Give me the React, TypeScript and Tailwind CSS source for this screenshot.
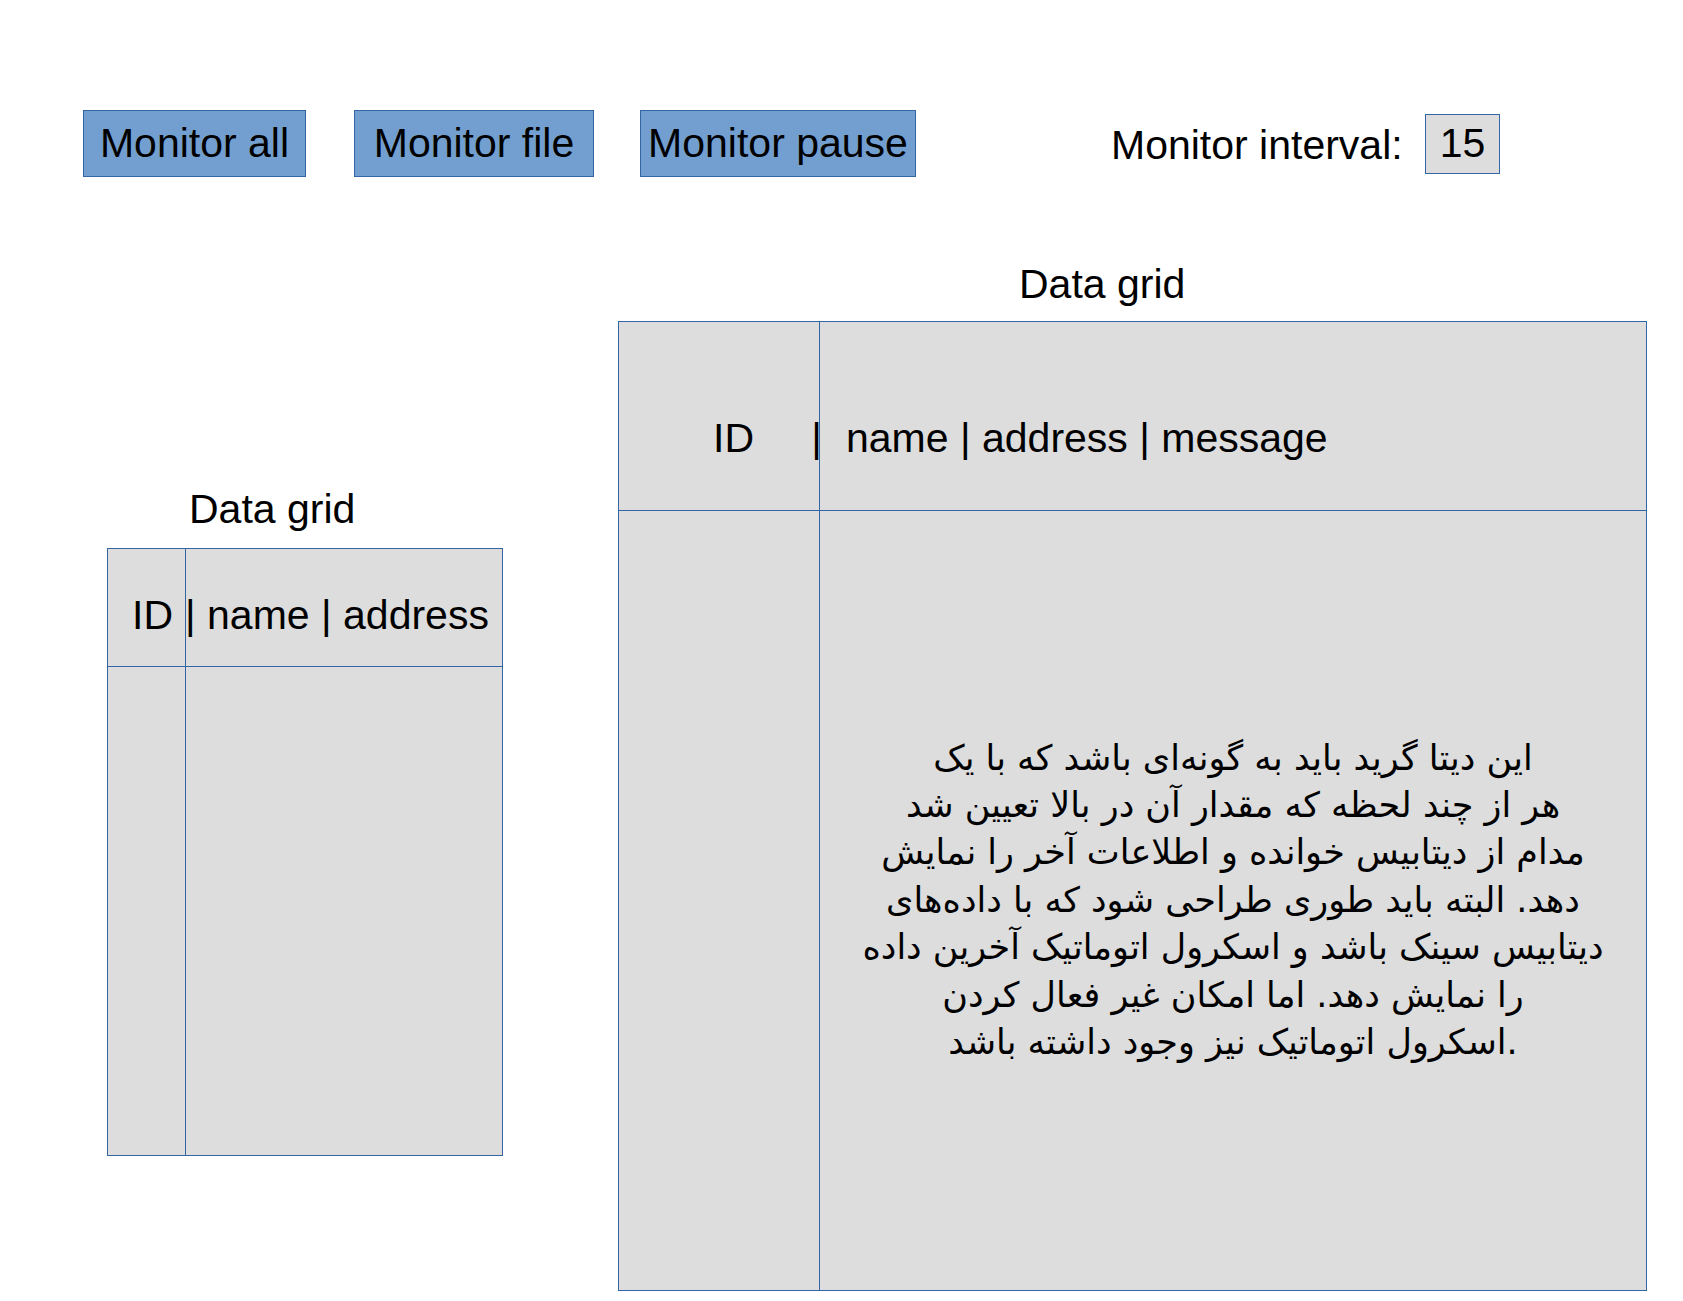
import React from "react";

const persianLines = [
  "این دیتا گرید باید به گونه‌ای باشد که با یک",
  "هر از چند لحظه که مقدار آن در بالا تعیین شد",
  "مدام از دیتابیس خوانده و اطلاعات آخر را نمایش",
  "دهد. البته باید طوری طراحی شود که با داده‌های",
  "دیتابیس سینک باشد و اسکرول اتوماتیک آخرین داده",
  "را نمایش دهد. اما امکان غیر فعال کردن",
  "اسکرول اتوماتیک نیز وجود داشته باشد.",
];

export default function App() {
  return (
    <div className="w-[1683px] h-[1301px] bg-white text-black overflow-hidden font-['Liberation_Sans','DejaVu_Sans',sans-serif]">
      {/* toolbar row */}
      <div className="flex items-center pl-[83px] pt-[110px]">
        <div className="w-[223px] h-[67px] shrink-0 bg-[#729fcf] border border-[#3465a4] flex items-center justify-center text-[41px] leading-none">
          Monitor all
        </div>
        <div className="w-[240px] ml-[48px] h-[67px] shrink-0 bg-[#729fcf] border border-[#3465a4] flex items-center justify-center text-[41px] leading-none">
          Monitor file
        </div>
        <div className="w-[276px] ml-[46px] h-[67px] shrink-0 bg-[#729fcf] border border-[#3465a4] flex items-center justify-center text-[41px] leading-none whitespace-nowrap">
          Monitor pause
        </div>
        <div className="w-[314px] ml-[195px] shrink-0 text-[41px] leading-none mt-[3px] whitespace-nowrap">
          Monitor interval:
        </div>
        <div className="w-[75px] h-[60px] shrink-0 bg-[#dddddd] border border-[#3465a4] flex items-center justify-center text-[41px] leading-none">
          15
        </div>
      </div>

      {/* grids */}
      <div className="flex items-start">
        {/* left grid */}
        <div className="ml-[107px] mt-[312px] w-[396px] shrink-0">
          <div className="h-[41px] pl-[82px] text-[41px] leading-none whitespace-nowrap">Data grid</div>
          <div className="mt-[18px] h-[608px] border border-[#3465a4] bg-[#dddddd] flex flex-col">
            <div className="h-[118px] border-b border-[#3465a4] flex shrink-0">
              <div className="w-[78px] border-r border-[#3465a4] pl-[24px] pt-[46px] text-[41px] leading-none whitespace-nowrap">
                ID
              </div>
              <div className="flex-1 pt-[46px] text-[41px] leading-none whitespace-nowrap ml-[-1px]">
                | name | address
              </div>
            </div>
            <div className="flex-1 flex">
              <div className="w-[78px] border-r border-[#3465a4]" />
              <div className="flex-1" />
            </div>
          </div>
        </div>

        {/* right grid */}
        <div className="ml-[115px] mt-[87px] w-[1029px] shrink-0">
          <div className="h-[41px] pl-[401px] text-[41px] leading-none whitespace-nowrap">Data grid</div>
          <div className="mt-[16px] h-[970px] border border-[#3465a4] bg-[#dddddd] flex flex-col">
            <div className="h-[189px] border-b border-[#3465a4] flex shrink-0">
              <div className="w-[201px] border-r border-[#3465a4] pl-[94px] pt-[96px] text-[41px] leading-none whitespace-nowrap flex">
                <span>ID</span>
                <span className="ml-auto mr-[-3px]">|</span>
              </div>
              <div className="flex-1 pl-[26px] pt-[96px] text-[41px] leading-none whitespace-nowrap">
                name | address | message
              </div>
            </div>
            <div className="flex-1 flex">
              <div className="w-[201px] border-r border-[#3465a4]" />
              <div className="flex-1 flex items-center justify-center">
                <div dir="ltr" className="text-center text-[35px] leading-[47.4px] font-['DejaVu_Sans',sans-serif]">
                  {persianLines.map((l, i) => (
                    <div key={i} className="whitespace-nowrap">
                      {l}
                    </div>
                  ))}
                </div>
              </div>
            </div>
          </div>
        </div>
      </div>
    </div>
  );
}
